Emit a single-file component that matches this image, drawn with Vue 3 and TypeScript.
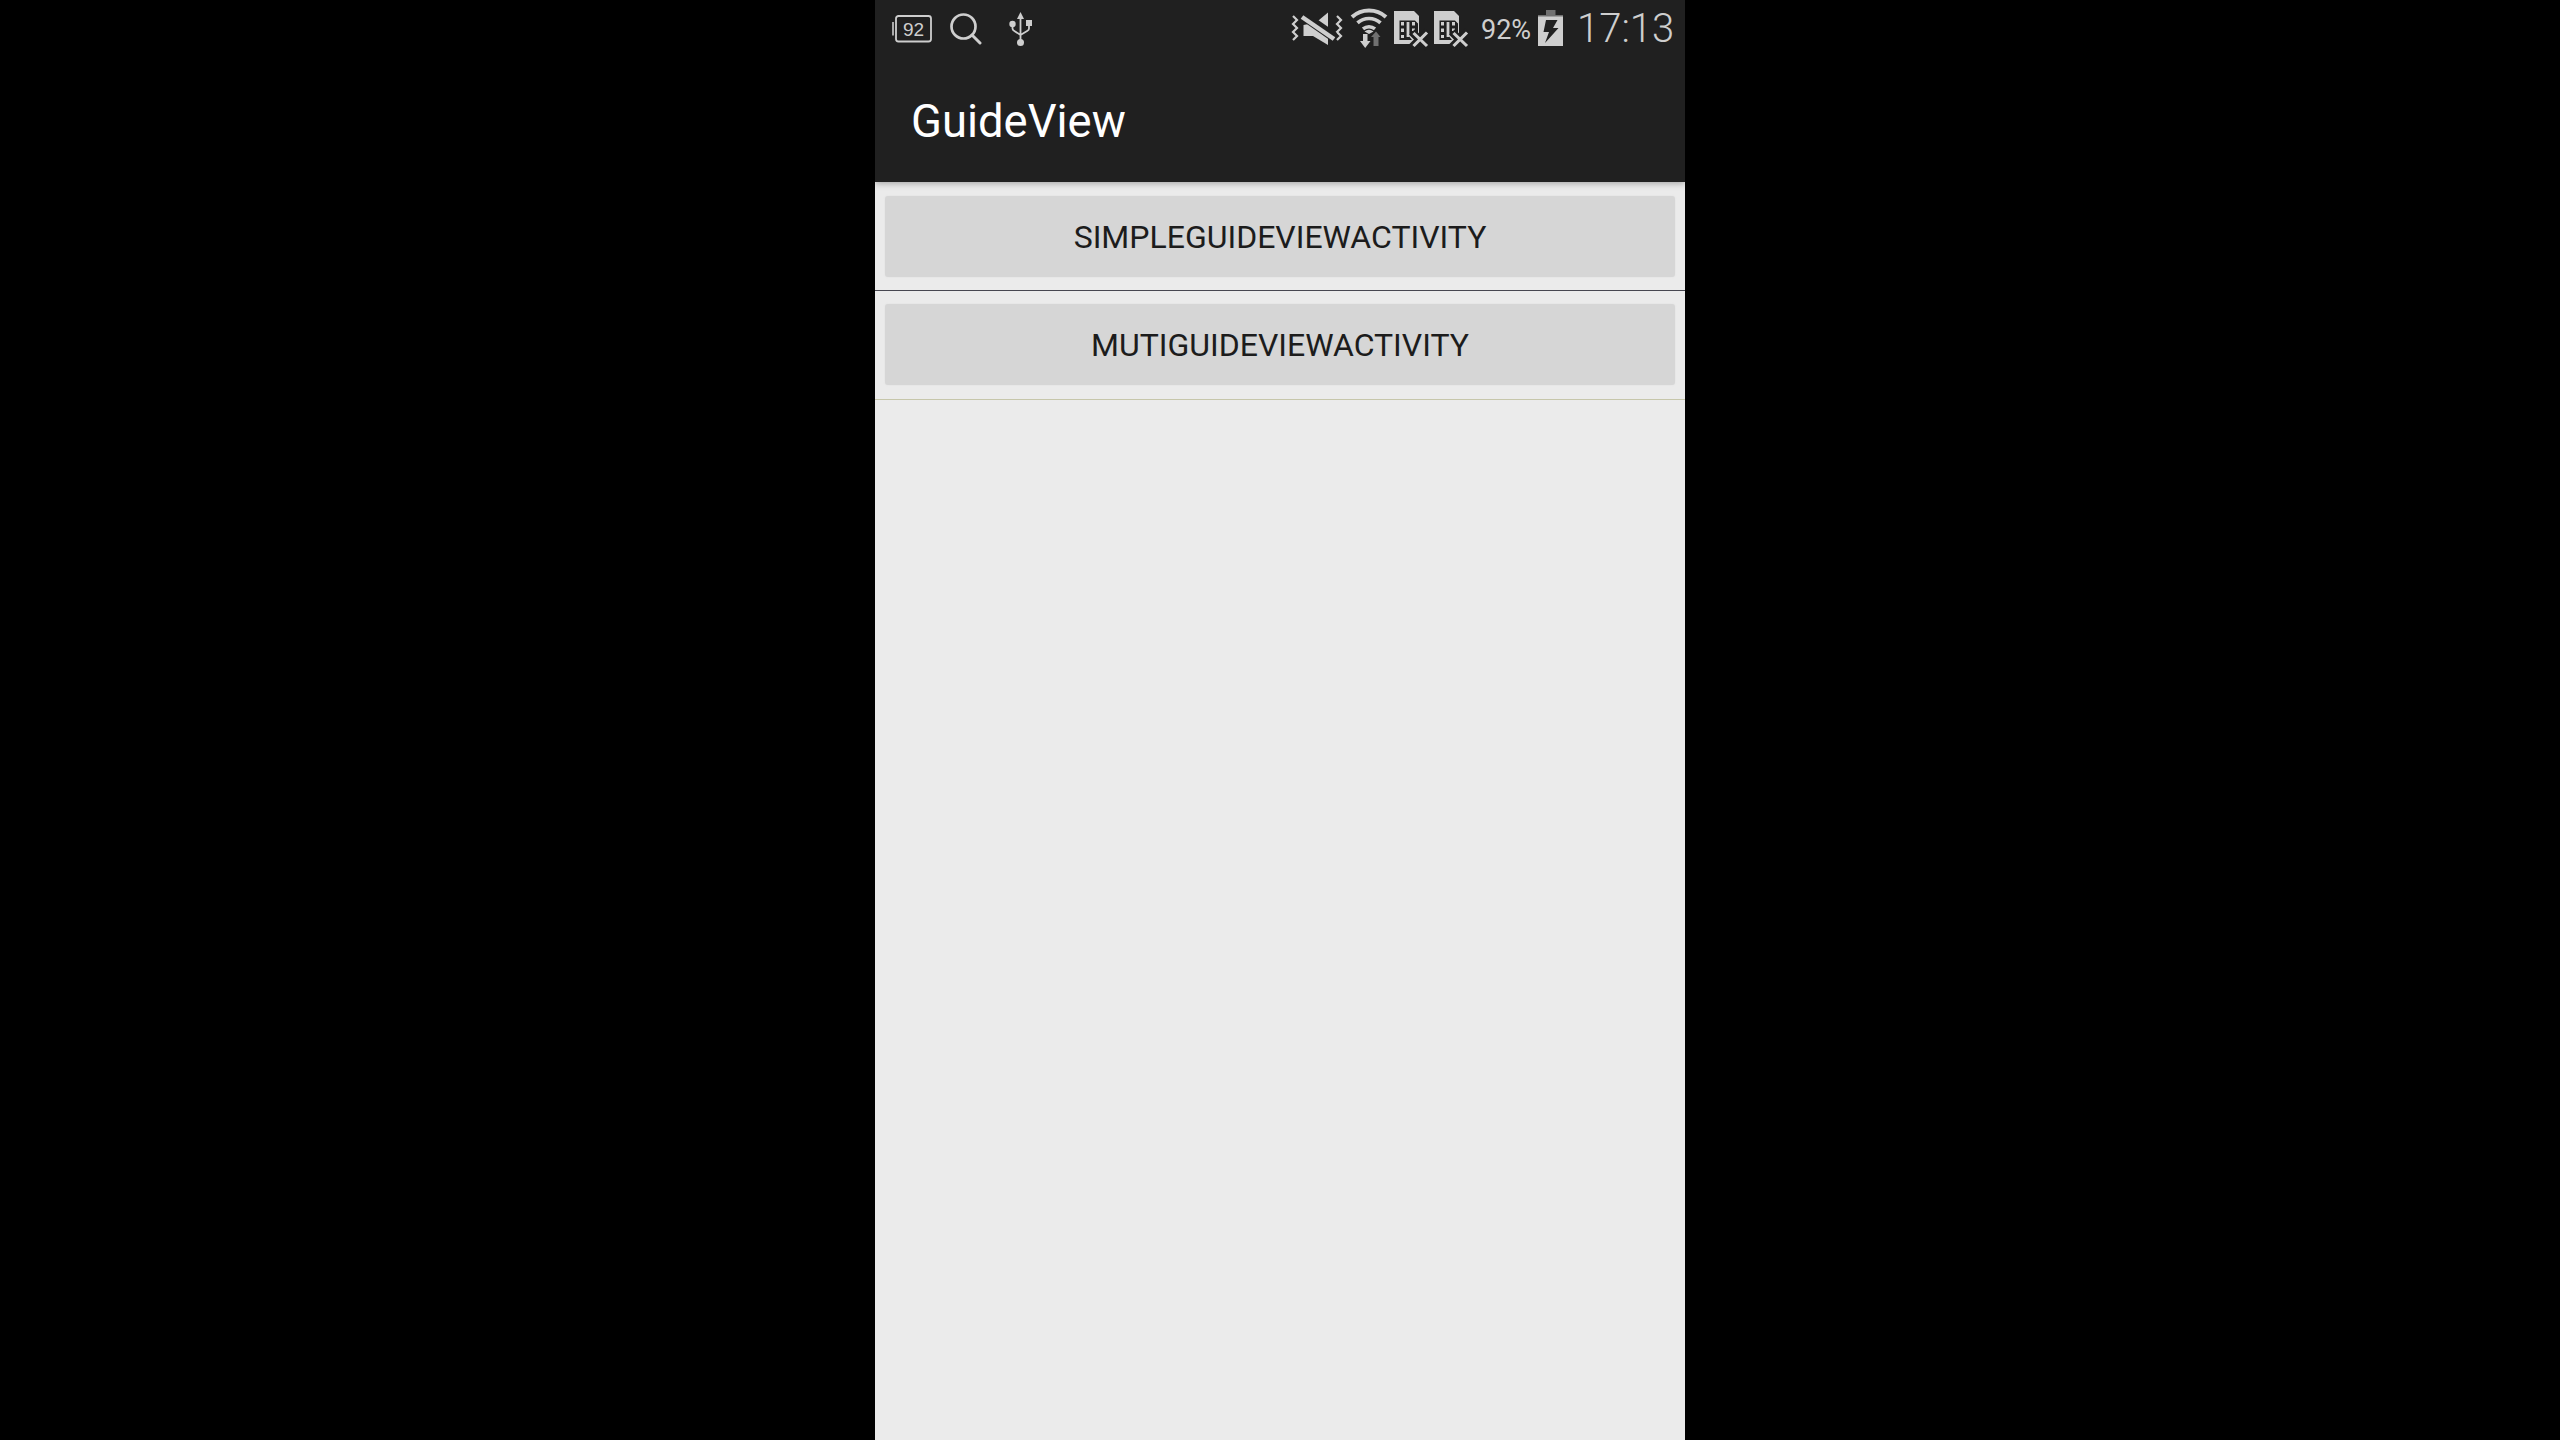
<script setup lang="ts">
const activities: string[] = ['SimpleGuideViewActivity', 'MutiGuideViewActivity']
</script>

<template>
  <div class="stage">
    <main class="phone">
      <header class="top">
        <div class="status">
          <div class="group">
            <div class="level">
              <svg width="40" height="28" viewBox="0 0 40 28">
                <rect x="4" y="1" width="35" height="25.5" rx="2.5" fill="none" stroke="currentColor" stroke-width="1.8" />
                <path d="M1 7V20.500" stroke="currentColor" stroke-width="1.6" />
              </svg>
              <span>92</span>
            </div>
            <svg class="search" width="32" height="32" viewBox="0 0 32 32" fill="none" stroke="currentColor">
              <circle cx="13.500" cy="13.500" r="12" stroke-width="2.700" />
              <path d="M22 22L30 30" stroke-width="3" stroke-linecap="round" />
            </svg>
            <svg class="usb" width="24" height="34" viewBox="0 0 24 34" fill="none" stroke="currentColor" stroke-width="1.800">
              <path d="M11.500 5V28M3.500 12V16.500Q3.500 18 5 18.700L11.500 23L18.500 18.700Q20 18 20 16.500V11" />
              <g fill="currentColor" stroke="none">
                <path d="M11.500 0L15 7H8Z" />
                <circle cx="3.500" cy="12" r="3.200" />
                <rect x="17" y="8" width="6" height="6" />
                <circle cx="11.500" cy="30.500" r="3.500" />
              </g>
            </svg>
          </div>
          <div class="group">
            <svg width="180" height="60" viewBox="1290 0 180 60" fill="none" stroke="currentColor">
              <path d="M1293 16L1297 20L1293 24L1297 28L1293 32L1297 36L1293 40" stroke-width="2.200" />
              <path d="M1337 16L1341 20L1337 24L1341 28L1337 32L1341 36L1337 40" stroke-width="2.200" />
              <path d="M1303.500 25V36H1313L1328 45V12.500L1316 22.500Z" fill="currentColor" stroke="none" />
              <path d="M1301 14L1334 37" stroke="#202020" stroke-width="10" />
              <path d="M1302 17L1334 39" stroke-width="4.500" />
              <path d="M1352 17A25.500 25.500 0 0 1 1386 17" stroke-width="4" />
              <path d="M1357.500 22.800A17.500 17.500 0 0 1 1380.500 22.800" stroke-width="3.700" />
              <path d="M1363 28.800A9.500 9.500 0 0 1 1375 28.800" stroke-width="3.500" />
              <path d="M1364.500 31.500Q1369 28 1373.500 31.500L1369 34Z" fill="currentColor" stroke="none" />
              <path d="M1363 34H1367.500V41H1370.500L1365.200 48L1360 41H1363Z" fill="currentColor" stroke="none" />
              <path d="M1376 31.500L1380.500 37H1378.500V46H1373.500V37H1371Z" fill="#717171" stroke="none" />
              <g v-for="offset in [0, 40]" :key="offset" :transform="`translate(${offset} 0)`">
                <path d="M1394 11H1414L1419 16V44H1394Z" fill="currentColor" stroke="none" />
                <path d="M1399.500 20.500H1415L1418 23.500V35H1408L1412 40H1399.500Z" fill="#202020" stroke="none" />
                <path d="M1402.500 22V38M1413.500 22V31" stroke-width="3" stroke-dasharray="3.500 3" />
                <path d="M1408 22V37" stroke-width="2.800" />
                <path d="M1412 32L1428 48M1428 31L1411 48" stroke="#202020" stroke-width="8" />
                <path d="M1413.500 33L1427 46M1427 32.500L1413.500 46" stroke-width="3.100" />
              </g>
            </svg>
            <span class="percent">92%</span>
            <svg class="battery" width="25" height="38" viewBox="0 0 25 38">
              <path d="M8 0H17.500V5H25V7H0V5H8Z" fill="#717171" />
              <path d="M0 6.500H25V36H0Z" fill="currentColor" />
              <path d="M8 10H19.500L15 18H20.500L7 33L11 22H5.500Z" fill="#202020" />
            </svg>
            <span class="clock">17:13</span>
          </div>
        </div>
        <h1>GuideView</h1>
      </header>
      <section v-for="name in activities" :key="name" class="row">
        <button type="button">{{ name }}</button>
      </section>
    </main>
  </div>
</template>

<style>
body {
  margin: 0;
  background: #000;
}
</style>

<style scoped>
.stage {
  display: flex;
  justify-content: center;
  height: 1440px;
  background: #000;
  overflow: hidden;
  font-family: Roboto, "Noto Sans", sans-serif;
}
.phone {
  width: 810px;
  height: 1440px;
  background: #ebebeb;
}
.top {
  height: 182px;
  background: #202020;
  box-shadow: 0 1px 7px rgba(0, 0, 0, 0.35);
  clip-path: inset(0 0 -12px 0);
}
.status {
  display: flex;
  justify-content: space-between;
  height: 60px;
  padding: 0 10px 0 17px;
  color: #cecece;
}
.group {
  display: flex;
  align-items: flex-start;
}
.level {
  display: grid;
  margin-top: 15px;
}
.level > * {
  grid-area: 1 / 1;
}
.level span {
  height: 28px;
  padding-left: 3px;
  font: 19px/30px "Liberation Sans", sans-serif;
  text-align: center;
}
.search {
  margin: 13px 0 0 18px;
}
.usb {
  margin: 12px 0 0 27px;
}
.percent {
  width: 57px;
  margin-left: 11px;
  font-size: 27px;
  line-height: 60px;
}
.battery {
  margin-top: 10px;
}
.clock {
  width: 98px;
  margin-left: 14px;
  font-size: 40px;
  font-weight: 300;
  line-height: 57px;
}
h1 {
  margin: 0;
  padding-left: 36px;
  color: #fff;
  font-size: 45.400px;
  font-weight: 400;
  line-height: 123px;
}
.row {
  box-sizing: border-box;
  height: 109px;
  padding: 14px 10px 0;
  border-bottom: 1px solid #474750;
}
.row:last-child {
  padding-top: 13px;
  border-bottom-color: #c6c6aa;
}
button {
  display: block;
  width: 100%;
  height: 81px;
  padding: 2px 0 0;
  border: 0;
  border-radius: 3px;
  background: #d6d6d6;
  box-shadow: 0 0 2px #dedede;
  color: #1c1c1c;
  font: 32px/79px Roboto, "Noto Sans", sans-serif;
  text-transform: uppercase;
}
</style>
